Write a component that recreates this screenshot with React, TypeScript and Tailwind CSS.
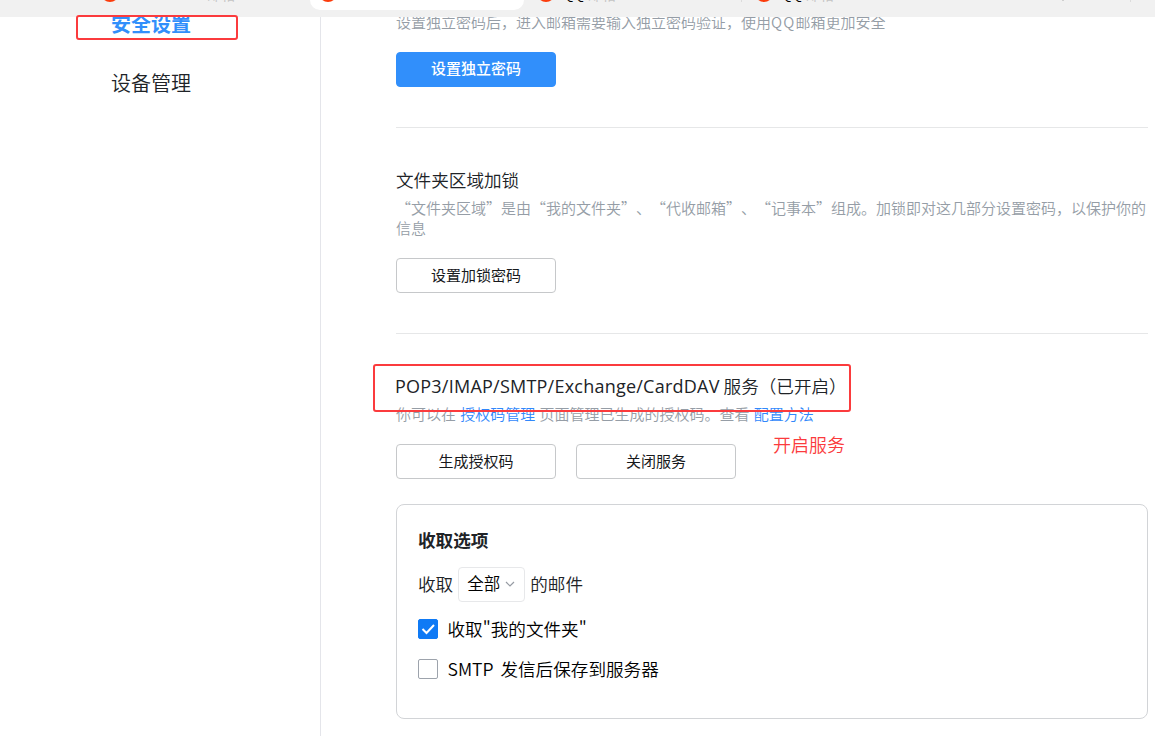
import type { ReactNode } from 'react';

const tabs = [
  { title: '', muted: true, active: false },
  { title: '', muted: false, active: true },
  { title: 'QQ', muted: false, active: false },
  { title: 'QQ', muted: false, active: false },
];

const options = [
  { label: '收取"我的文件夹"', checked: true },
  { label: 'SMTP 发信后保存到服务器', checked: false },
];

function TabStrip() {
  return (
    <header className="relative z-10 flex h-[17px] shrink-0 items-start gap-1 overflow-hidden bg-[#f1f1f1] pl-[92px]">
      {tabs.map((tab, index) => (
        <div
          key={index}
          className={`flex h-[10px] w-[214px] shrink-0 items-start rounded-b-[10px] ${
            tab.active ? 'bg-white' : ''
          }`}
        >
          <span className="-mt-4 ml-[9px] size-[18px] shrink-0 rounded-full bg-[#fb3c0c]" />
          {!tab.active && (
            <span className="-mt-[15px] ml-2 text-[14px] leading-[18px] font-normal whitespace-nowrap text-black">
              {tab.title}
              <span className={`text-[#c4c4c4] ${tab.muted ? 'ml-20' : 'ml-1'}`}>邮箱</span>
            </span>
          )}
          {index === 2 && <span className="ml-auto h-0.5 w-px bg-[#dcdcdc]" />}
        </div>
      ))}
      <span className="ml-auto h-px w-0.5 bg-[#cfcfcf]" />
      <span className="mr-6 ml-[62px] h-0.5 w-px bg-[#dcdcdc]" />
    </header>
  );
}

function Button({ children, primary = false }: { children: ReactNode; primary?: boolean }) {
  return (
    <button
      className={`flex h-[35px] w-40 items-center justify-center rounded-[4px] border text-[15px] leading-5 ${
        primary
          ? 'border-[#318ffb] bg-[#318ffb] pb-1 font-medium text-white'
          : 'border-[#c6c8ca] bg-white pb-0.5 text-[#17191c]'
      }`}
    >
      {children}
    </button>
  );
}

export default function App() {
  return (
    <div
      lang="zh-CN"
      className="relative flex h-[736px] w-[1155px] flex-col overflow-hidden bg-white font-['Noto_Sans_CJK_SC',sans-serif] text-[#202327] [text-spacing-trim:space-all]"
    >
      <TabStrip />

      <div className="flex min-h-0 flex-1">
        <aside className="w-[321px] shrink-0 border-r border-[#e4e5ea] pl-[111px] text-xl leading-[30px]">
          <div className="-mt-2 font-bold text-[#318ffb]">安全设置</div>
          <div className="mt-[29px] font-[350]">设备管理</div>
        </aside>

        <main className="w-[827px] pl-[75px] font-[350]">
          <section className="-mt-[5px] h-[116px] border-b border-[#e6e7e8]">
            <p className="text-[15px] leading-5 text-[#959da6]">
              设置独立密码后，进入邮箱需要输入独立密码验证，使用<span className="tracking-[1.2px]">QQ</span>邮箱更加安全
            </p>
            <div className="mt-5">
              <Button primary>设置独立密码</Button>
            </div>
          </section>

          <section className="h-[206px] border-b border-[#e6e7e8] pt-[39px]">
            <h2 className="text-[17.6px] leading-[26px]">文件夹区域加锁</h2>
            <p className="mt-[5px] text-[15px] leading-5 text-[#959da6]">
              “文件夹区域”是由“我的文件夹”、“代收邮箱”、“记事本”组成。加锁即对这几部分设置密码，以保护你的信息
            </p>
            <div className="mt-5 font-normal">
              <Button>设置加锁密码</Button>
            </div>
          </section>

          <section className="pt-[39px]">
            <h2 className="-ml-px text-[17.6px] leading-[26px] whitespace-nowrap">
              <span className="font-['Open_Sans'] text-[18px] font-normal tracking-[0.23px]">
                POP3/IMAP/SMTP/Exchange/CardDAV
              </span>{' '}
              服务（已开启）
            </h2>
            <p className="mt-[5px] text-[15px] leading-5 whitespace-nowrap text-[#959da6] [word-spacing:0.9px]">
              你可以在 <a className="text-[#3188fb]">授权码管理</a> 页面管理已生成的授权码。查看{' '}
              <a className="text-[#3188fb]">配置方法</a>
            </p>
            <div className="mt-5 flex gap-5 font-normal">
              <Button>生成授权码</Button>
              <Button>关闭服务</Button>
            </div>

            <div className="mt-[25px] h-[215px] rounded-lg border border-[#d2d4d7] px-[21px] pt-[21px] text-[17.6px]">
              <h3 className="leading-[27px] font-bold">收取选项</h3>
              <div className="mt-3.5 flex h-[35px] items-center">
                <span>收取</span>
                <div className="mx-[5px] flex h-[35px] w-[67px] items-center rounded-[4px] border border-[#e7e8ea] pb-0.5 pl-2 text-[16.5px] text-black">
                  全部
                  <svg className="mt-px ml-1 size-3" viewBox="0 0 12 12" fill="none" stroke="#969ba3" strokeWidth="1.2">
                    <path d="M2 4l4 4 4-4" />
                  </svg>
                </div>
                <span>的邮件</span>
              </div>
              <div className="mt-[7px] text-black">
                {options.map((option) => (
                  <label key={option.label} className="flex h-10 items-center gap-[9.5px] [word-spacing:3px]">
                    <span
                      className={`flex size-5 items-center justify-center rounded-[2px] border ${
                        option.checked ? 'border-[#0f7af5] bg-[#0f7af5]' : 'border-[#9da3ac] bg-white'
                      }`}
                    >
                      {option.checked && (
                        <svg className="size-[18px] shrink-0" viewBox="0 0 18 18" fill="none" stroke="white" strokeWidth="2">
                          <path d="M3.5 9l4 4 7.5-8" />
                        </svg>
                      )}
                    </span>
                    <span>{option.label}</span>
                  </label>
                ))}
              </div>
            </div>
          </section>
        </main>
      </div>

      {/* red annotations */}
      <div className="absolute top-[15px] left-[76px] z-20 h-[25px] w-[162px] rounded-[3px] border-2 border-[#fb3b3d]" />
      <div className="absolute top-[364px] left-[373px] z-20 h-[48px] w-[478px] rounded-[3px] border-2 border-[#fb3b3d]" />
      <span className="absolute top-[431px] left-[773px] z-20 text-[18px] leading-[26px] font-[350] whitespace-nowrap text-[#fb3b3d]">
        开启服务
      </span>
    </div>
  );
}
